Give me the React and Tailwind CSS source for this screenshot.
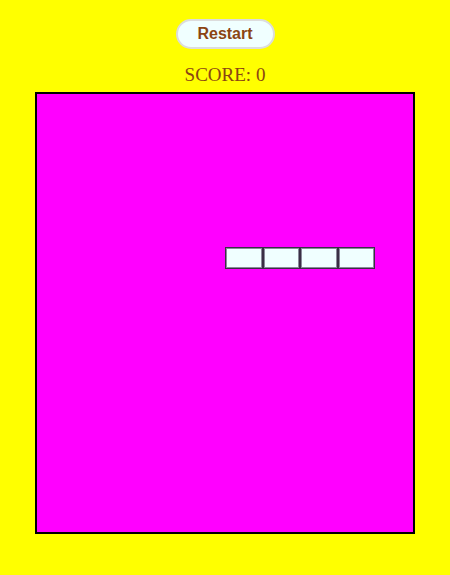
import React from 'react';

const COLS = 10;
const ROWS = 20;

// active piece: an I block lying flat
const piece = [
  [7, 5],
  [7, 6],
  [7, 7],
  [7, 8],
];

const App = () => {
  const filled = new Set(piece.map(([r, c]) => `${r}-${c}`));

  const cells = [];
  for (let r = 0; r < ROWS; r++) {
    for (let c = 0; c < COLS; c++) {
      const on = filled.has(`${r}-${c}`);
      cells.push(
        <div
          key={`${r}-${c}`}
          className={on ? 'bg-[#f0ffff] border border-[#3a2f45] shadow-[inset_0_0_0_1px_#8a8a9a]' : ''}
        />
      );
    }
  }

  return (
    <div className="w-[450px] h-[575px] bg-[#ffff00] flex flex-col items-center pt-[19px]">
      <button
        className="w-[99px] h-[30px] rounded-full bg-[#f0ffff] border-2 border-[#dcdcdc] text-[#8b4513] font-bold text-[16px] leading-none"
        style={{ fontFamily: '"Liberation Sans", Arial, sans-serif' }}
      >
        Restart
      </button>

      <div
        className="mt-[15px] text-[#8b4513] text-[19px] leading-[22px]"
        style={{ fontFamily: '"Liberation Serif", "Times New Roman", serif' }}
      >
        SCORE: 0
      </div>

      <div className="mt-[6px] w-[380px] h-[442px] border-2 border-black bg-[#ff00ff] grid grid-cols-10 grid-rows-[repeat(20,minmax(0,1fr))]">
        {cells}
      </div>
    </div>
  );
};

export default App;
